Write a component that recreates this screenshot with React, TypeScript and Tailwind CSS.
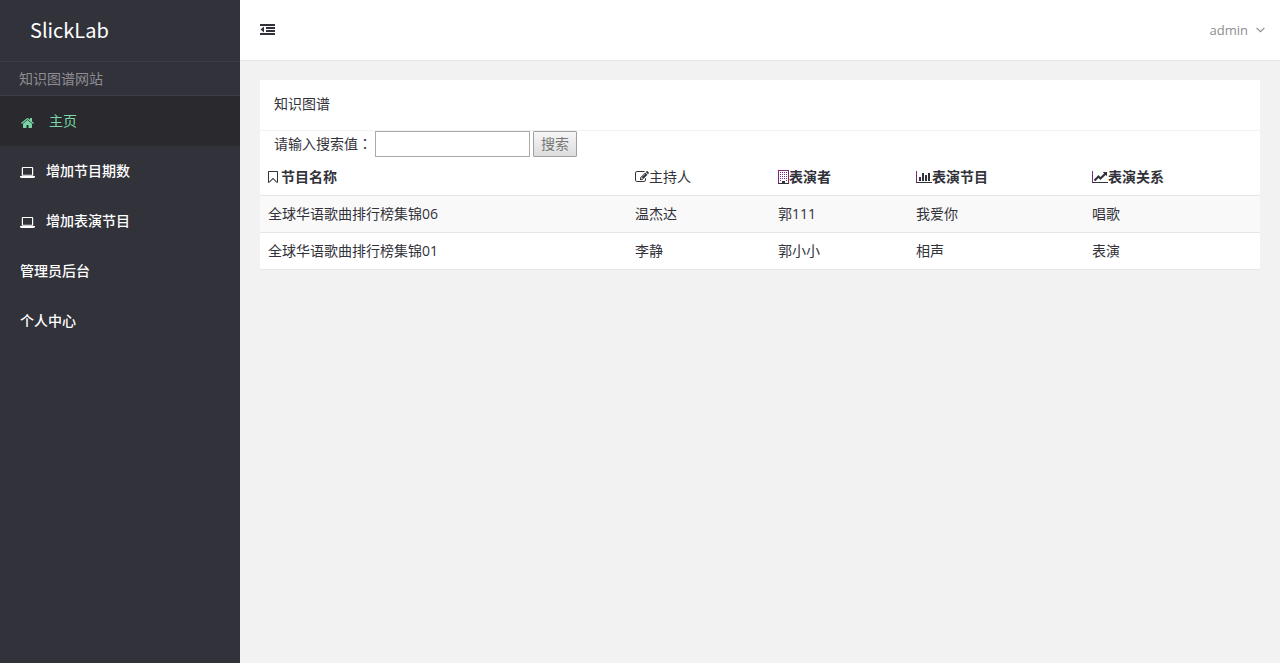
import type { ReactNode } from 'react';

type GlyphProps = { width: number; className?: string; children: ReactNode };

// All glyphs share a 1792-unit em, drawn at 14px.
function Glyph({ width, className = '', children }: GlyphProps) {
  return (
    <svg
      aria-hidden="true"
      viewBox={`0 0 ${width} 1792`}
      className={`h-[14px] shrink-0 fill-current ${className}`}
    >
      {children}
    </svg>
  );
}

const HomeIcon = () => (
  <Glyph width={1664} className="mt-[3px] w-[15px]">
    <path d="M1408 992v480q0 26-19 45t-45 19H960v-384H704v384H320q-26 0-45-19t-19-45V992q0-1 .5-3t.5-3l575-474 575 474q1 2 1 6zm223-69l-62 74q-8 9-21 11h-3q-13 0-21-7L832 424l-692 577q-12 8-24 7-13-2-21-11l-62-74q-8-10-7-23.500T37 878l719-599q32-26 76-26t76 26l244 204V288q0-14 9-23t23-9h192q14 0 23 9t9 23v408l219 182q10 8 11 21.500t-7 23.500z" />
  </Glyph>
);

const LaptopIcon = () => (
  <svg aria-hidden="true" viewBox="0 0 15 11" className="mt-[3px] h-[11px] w-[15px] shrink-0 fill-current">
    <path
      fillRule="evenodd"
      d="M2.500 0h10l.7 .7v8H1.800v-8zM3 1.100v6.700h9V1.100zM0 9h15v1l-1 1H1l-1-1z"
    />
  </svg>
);

const OutdentIcon = () => (
  <svg aria-hidden="true" viewBox="0 0 15 12" className="h-[12px] w-[15px] fill-current">
    <path d="M0 0h15v2H0zM6 3h9v2H6zM6 6h9v2H6zM0 9h15v2H0zM4 2.500v6L0.500 5.500z" />
  </svg>
);

const BookmarkIcon = () => (
  <Glyph width={1280} className="w-[10px]">
    <path d="M1152 256H128v1242l423-406 89-85 89 85 423 406V256zm12-128q23 0 44 9 33 13 52.500 41t19.500 62v1289q0 34-19.500 62t-52.500 41q-19 8-44 8-48 0-83-32l-441-424-441 424q-36 33-83 33-23 0-44-9-33-13-52.500-41T0 1529V240q0-34 19.500-62T72 137q21-9 44-9h1048z" />
  </Glyph>
);

const EditIcon = () => (
  <Glyph width={1792} className="w-[14px]">
    <path d="M888 1184l116-116-152-152-116 116v56h96v96h56zm440-720q-16-16-33 1L945 815q-17 17-1 33t33-1l350-350q17-17 1-33zm80 594v190q0 119-84.500 203.500T1120 1536H288q-119 0-203.500-84.500T0 1248V416q0-119 84.500-203.500T288 128h832q63 0 117 25 15 7 18 23 3 17-9 29l-49 49q-14 14-32 8-23-6-45-6H288q-66 0-113 47t-47 113v832q0 66 47 113t113 47h832q66 0 113-47t47-113v-126q0-13 9-22l64-64q15-15 35-7t20 29zm-96-738l288 288-672 672H640V992zm444 132l-92 92-288-288 92-92q28-28 68-28t68 28l152 152q28 28 28 68t-28 68z" />
  </Glyph>
);

const BuildingIcon = () => (
  <svg aria-hidden="true" viewBox="0 0 11 14" className="h-[14px] w-[11px] shrink-0">
    <path className="fill-[#7b2a7b]" d="M0 0h11v14H0zM1 1v12h9V1z" fillRule="evenodd" />
    <path
      className="fill-[#7b2a7b]"
      d="M2 2h1v1H2zM4 2h1v1H4zM6 2h1v1H6zM8 2h1v1H8zM2 4h1v1H2zM4 4h1v1H4zM6 4h1v1H6zM8 4h1v1H8zM2 6h1v1H2zM4 6h1v1H4zM6 6h1v1H6zM8 6h1v1H8zM2 8h1v1H2zM4 8h1v1H4zM6 8h1v1H6zM8 8h1v1H8zM2 10h1v1H2zM8 10h1v1H8z"
    />
    <path className="fill-[#32323a]" d="M4 11h3v2H4zM0 13h11v1H0z" />
  </svg>
);

const BarChartIcon = () => (
  <Glyph width={2048} className="w-[16px]">
    <path d="M640 896v512H384V896h256zm384-512v1024H768V384h256zm1024 1152v128H0V128h128v1408h1920zM1408 640v768h-256V640h256zm384-256v1024h-256V384h256z" />
    <path className="fill-[#7b2a7b]" d="M0 128h128v1408H0z" />
  </Glyph>
);

const LineChartIcon = () => (
  <Glyph width={2048} className="w-[16px]">
    <path d="M2048 1536v128H0V128h128v1408h1920zM1920 288v435q0 21-19.500 29.500T1865 745l-121-121-633 633q-10 10-23 10t-23-10L832 1024l-416 416-192-192 585-585q10-10 23-10t23 10l233 233 464-464-121-121q-16-16-7.500-35.500T1453 256h435q14 0 23 9t9 23z" />
    <path className="fill-[#7b2a7b]" d="M0 128h128v1408H0z" />
  </Glyph>
);

const navItems = [
  { label: '增加节目期数', icon: true },
  { label: '增加表演节目', icon: true },
  { label: '管理员后台', icon: false },
  { label: '个人中心', icon: false },
];

const columns = [
  { label: '节目名称', icon: <BookmarkIcon />, cell: 'w-[36.7%]', inner: 'gap-[3px] font-bold' },
  { label: '主持人', icon: <EditIcon />, cell: 'w-[14.3%]', inner: 'font-normal' },
  { label: '表演者', icon: <BuildingIcon />, cell: 'w-[13.8%]', inner: 'font-bold' },
  { label: '表演节目', icon: <BarChartIcon />, cell: 'w-[17.6%]', inner: 'font-bold' },
  { label: '表演关系', icon: <LineChartIcon />, cell: 'w-[17.6%]', inner: 'font-bold' },
];

const rows = [
  ['全球华语歌曲排行榜集锦06', '温杰达', '郭111', '我爱你', '唱歌'],
  ['全球华语歌曲排行榜集锦01', '李静', '郭小小', '相声', '表演'],
];

export default function App() {
  return (
    <div className="flex min-h-screen bg-[#f2f2f2] font-['Open_Sans','Noto_Sans_CJK_SC',sans-serif] text-[14px] leading-[20px] text-[#32323a]">
      <aside className="w-[240px] shrink-0 bg-[#32323a] text-white">
        <a
          href="#"
          className="flex h-[61px] items-center pb-[2px] pl-[30px] font-['Noto_Sans_CJK_SC',sans-serif] text-[20px]"
        >
          SlickLab
        </a>
        <h3 className="flex h-[35px] items-center border-y border-[#3d3d47] pl-[19px] text-[#8d8d93]">
          知识图谱网站
        </h3>
        <nav>
          <a href="#" className="flex h-[50px] items-center gap-[14px] bg-[#29292e] pl-5 text-[#79d6a5]">
            <HomeIcon />
            主页
          </a>
          {navItems.map((item) => (
            <a key={item.label} href="#" className="flex h-[50px] items-center gap-[11px] pl-5 font-medium">
              {item.icon && <LaptopIcon />}
              {item.label}
            </a>
          ))}
        </nav>
      </aside>

      <div className="min-w-0 flex-1">
        <header className="flex h-[61px] items-center justify-between border-b border-[#e5e5e5] bg-white pr-[15px] pl-5">
          <button type="button" aria-label="切换菜单">
            <OutdentIcon />
          </button>
          <button type="button" className="flex items-center gap-2 text-[13px] text-[#8d8d93]">
            admin
            <svg aria-hidden="true" viewBox="0 0 9 6" className="h-[6px] w-[9px] fill-none stroke-current">
              <path d="M0.600 0.800l3.900 3.900 3.900-3.900" strokeWidth="1.200" />
            </svg>
          </button>
        </header>

        <main className="px-5 pt-[19px]">
          <section className="bg-white">
            <h1 className="flex h-[51px] items-center border-b border-[#f2f2f2] px-[14px] pb-[2px]">知识图谱</h1>
            <form className="flex h-[28px] items-start pl-[14px]" onSubmit={(e) => e.preventDefault()}>
              <label htmlFor="search" className="w-[101px] leading-[26px]">
                请输入搜索值<span className="font-['Open_Sans','Noto_Sans_CJK_TC',sans-serif]" lang="zh-TW">：</span>
              </label>
              <input
                id="search"
                type="text"
                className="h-[26px] w-[155px] border border-[#a9a9a9] bg-white px-1 outline-none"
              />
              <button
                type="submit"
                className="ml-[3px] h-[26px] w-[44px] rounded-[1px] border border-[#a0a0a0] bg-linear-to-b from-[#f6f6f6] to-[#dddddd] text-[#767676]"
              >
                搜索
              </button>
            </form>
            <table className="w-full table-fixed border-collapse text-left">
              <thead>
                <tr className="border-b border-[#e5e5e5]">
                  {columns.map((column) => (
                    <th key={column.label} scope="col" className={`p-2 ${column.cell}`}>
                      <span className={`flex items-center ${column.inner}`}>
                        {column.icon}
                        {column.label}
                      </span>
                    </th>
                  ))}
                </tr>
              </thead>
              <tbody>
                {rows.map((row) => (
                  <tr key={row[0]} className="border-b border-[#e5e5e5] odd:bg-[#f9f9f9]">
                    {row.map((value) => (
                      <td key={value} className="p-2">
                        {value}
                      </td>
                    ))}
                  </tr>
                ))}
              </tbody>
            </table>
          </section>
        </main>
      </div>
    </div>
  );
}
